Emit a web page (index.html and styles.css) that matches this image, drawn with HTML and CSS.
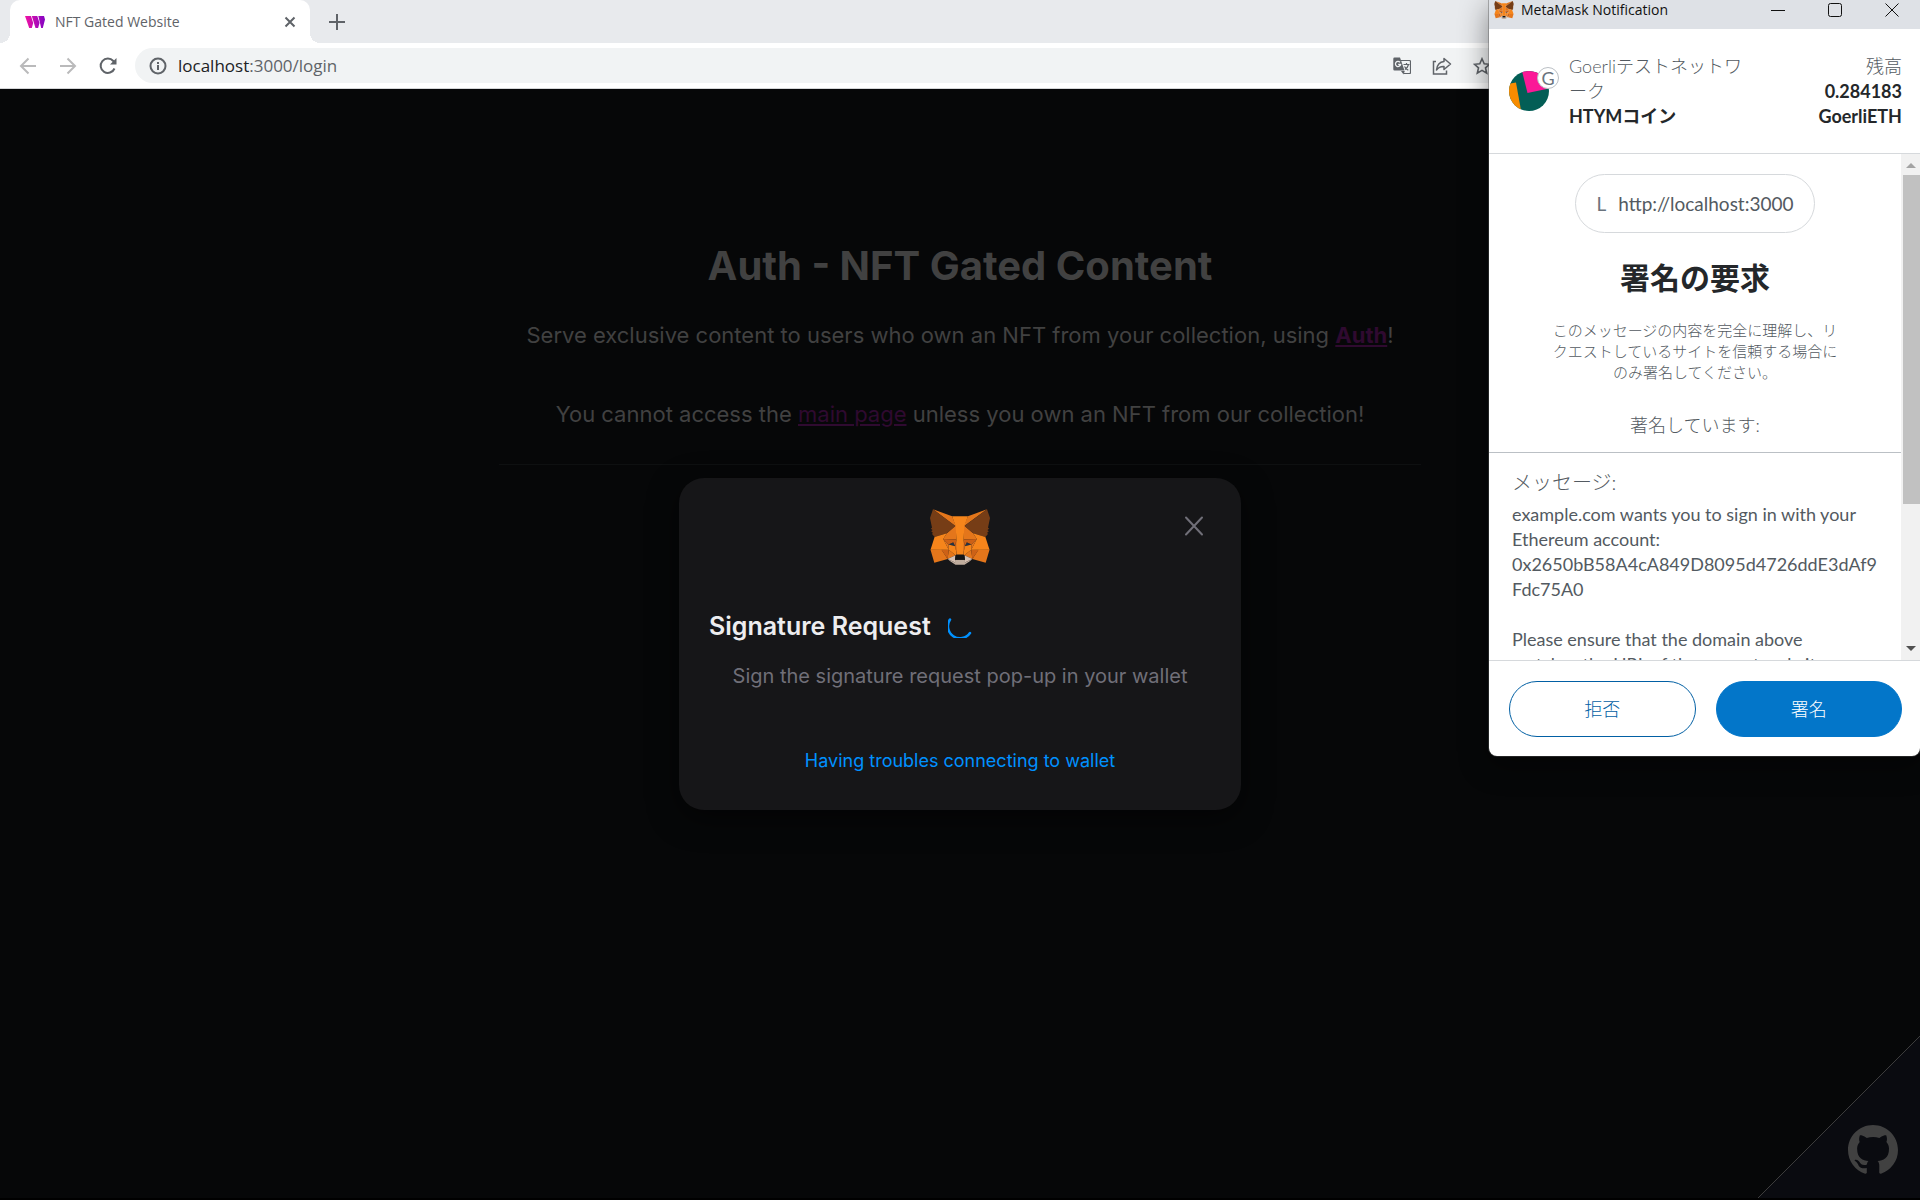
FILE: index.html
```html
<!DOCTYPE html>
<html lang="en">
<head>
  <meta charset="UTF-8">
  <title>NFT Gated Website</title>
  <link rel="stylesheet" href="styles.css">
</head>
<body>

  <!-- fox logo, used in the modal and in the popup title bar -->
  <svg class="defs" width="0" height="0" aria-hidden="true">
    <symbol id="fox" viewBox="31.8 35.5 255 236.4">
      <path fill="#e2761b" d="M274.1 35.5 174.6 109.4 193 65.8z"/>
      <path fill="#e4761b" d="M44.4 35.5 143.1 110.1 125.6 65.8zM238.3 206.8 211.8 247.4 268.5 263 284.8 207.7zM33.9 207.7 50.1 263 106.8 247.4 80.3 206.8zM103.6 138.2 87.8 162.1 144.1 164.6 142.1 104.1zM214.9 138.2 175.9 103.4 174.6 164.6 230.8 162.1zM106.8 247.4 140.6 230.9 111.4 208.1zM177.9 230.9 211.8 247.4 207.1 208.1z"/>
      <path fill="#d7c1b3" d="M211.8 247.4 177.9 230.9 180.6 253 180.3 262.3zM106.8 247.4 138.3 262.3 138.1 253 140.6 230.9z"/>
      <path fill="#233447" d="M138.8 193.5 110.6 185.2 130.5 176.1zM179.7 193.5 188 176.1 208 185.2z"/>
      <path fill="#cd6116" d="M106.8 247.4 111.6 206.8 80.3 207.7zM207 206.8 211.8 247.4 238.3 207.7zM230.8 162.1 174.6 164.6 179.8 193.5 188.1 176.1 208.1 185.2zM110.6 185.2 130.6 176.1 138.8 193.5 144.1 164.6 87.8 162.1z"/>
      <path fill="#e4751f" d="M87.8 162.1 111.4 208.1 110.6 185.2zM208.1 185.2 207.1 208.1 230.8 162.1zM144.1 164.6 138.8 193.5 145.4 227.6 146.9 182.7zM174.6 164.6 171.9 182.6 173.1 227.6 179.8 193.5z"/>
      <path fill="#f6851b" d="M179.8 193.5 173.1 227.6 177.9 230.9 207.1 208.1 208.1 185.2zM110.6 185.2 111.4 208.1 140.6 230.9 145.4 227.6 138.8 193.5z"/>
      <path fill="#c0ad9e" d="M180.3 262.3 180.6 253 178.1 250.8 140.4 250.8 138.1 253 138.3 262.3 106.8 247.4 117.8 256.4 140.1 271.9 178.4 271.9 200.8 256.4 211.8 247.4z"/>
      <path fill="#161616" d="M177.9 230.9 173.1 227.6 145.4 227.6 140.6 230.9 138.1 253 140.4 250.8 178.1 250.8 180.6 253z"/>
      <path fill="#763d16" d="M278.3 114.2 286.8 73.4 274.1 35.5 177.9 106.9 214.9 138.2 267.2 153.5 278.8 140 273.8 136.4 281.8 129.1 275.6 124.3 283.6 118.2zM31.8 73.4 40.3 114.2 34.9 118.2 42.9 124.3 36.8 129.1 44.8 136.4 39.8 140 51.3 153.5 103.6 138.2 140.6 106.9 44.4 35.5z"/>
      <path fill="#f6851b" d="M267.2 153.5 214.9 138.2 230.8 162.1 207.1 208.1 238.3 207.7 284.8 207.7zM103.6 138.2 51.3 153.5 33.9 207.7 80.3 207.7 111.4 208.1 87.8 162.1zM174.6 164.6 177.9 106.9 193.1 65.8 125.6 65.8 140.6 106.9 144.1 164.6 145.3 182.8 145.4 227.6 173.1 227.6 173.3 182.8z"/>
    </symbol>
  </svg>

  <div class="browser">
    <div class="tabs">
      <div class="tab">
        <svg class="favicon" viewBox="0 0 20 12" width="20" height="12">
          <defs>
            <linearGradient id="brand" x1="0" x2="1">
              <stop offset="0" stop-color="#f213a4"/>
              <stop offset="1" stop-color="#8204c4"/>
            </linearGradient>
          </defs>
          <path fill="url(#brand)" d="M0 0h6l2.200 7-1.400 5H4.200zM6.800 0h5.500l2.200 7-1.400 5h-2.600zM13.300 0H19l1 3.500L17.800 12h-1.600z"/>
        </svg>
        <span class="tab-title">NFT Gated Website</span>
        <button class="icon-btn" aria-label="Close tab">
          <svg viewBox="0 0 12 12" width="12" height="12" stroke="#5f6368" stroke-width="2"><path d="M1.500 1.500l9 9M10.500 1.500l-9 9"/></svg>
        </button>
      </div>
      <button class="icon-btn new-tab" aria-label="New tab">
        <svg viewBox="0 0 16 16" width="16" height="16" stroke="#5f6368" stroke-width="2"><path d="M8 0v16M0 8h16"/></svg>
      </button>
    </div>
    <div class="toolbar">
      <button class="icon-btn" aria-label="Back">
        <svg viewBox="0 0 18 18" width="18" height="18" fill="none" stroke="#bababb" stroke-width="2"><path d="M17 9H2M9.500 1.500L2 9l7.500 7.500"/></svg>
      </button>
      <button class="icon-btn" aria-label="Forward">
        <svg viewBox="0 0 18 18" width="18" height="18" fill="none" stroke="#bababb" stroke-width="2"><path d="M1 9h15M8.500 1.500L16 9l-7.500 7.500"/></svg>
      </button>
      <button class="icon-btn" aria-label="Reload">
        <svg viewBox="0 0 18 18" width="18" height="18" fill="none" stroke="#5f6368" stroke-width="2"><path d="M15.500 11.500A7.200 7.200 0 1 1 14.300 4L16 6"/><path d="M17.500 1v6.500H11z" fill="#5f6368" stroke="none"/></svg>
      </button>
      <div class="address">
        <svg viewBox="0 0 18 18" width="18" height="18" fill="none" stroke="#5f6368" stroke-width="2"><circle cx="9" cy="9" r="7.500"/><path d="M9 8v5M9 5v2"/></svg>
        <span class="url"><b>localhost</b>:3000/login</span>
        <span class="actions">
          <svg viewBox="0 0 18 18" width="18" height="18">
            <path fill="none" stroke="#5f6368" stroke-width="1.200" d="M8 3.500h8.500a1 1 0 0 1 1 1v11a1 1 0 0 1-1 1H11"/>
            <path fill="#5f6368" d="M1.500.5H7l4.500 13H1.500a1.200 1.200 0 0 1-1.200-1.200V1.700A1.200 1.200 0 0 1 1.500.5zM8 14h3.800L10.500 17.500z"/>
            <path fill="none" stroke="#f1f3f4" stroke-width="1.300" d="M7 5.200a2.600 2.600 0 1 0 .6 2.300H5.200"/>
            <path fill="none" stroke="#5f6368" stroke-width="1.200" d="M10.500 7.500h6M13.500 6v1.500M15.500 7.500c-.6 2.500-2 4-3.500 5M11.500 9.500c.8 1.400 2.200 2.800 3.800 3.800"/>
          </svg>
          <svg viewBox="0 0 20 18" width="20" height="18" fill="none" stroke="#5f6368" stroke-width="1.500"><path d="M4 4.500H1.500V17H14.500V13.500"/><path stroke-linejoin="round" d="M12 1.500L18.500 7 12 12.500V9.500C8.500 9.300 6.300 10.500 4.500 13 5 8.500 7.500 5 12 4.500z"/></svg>
          <svg viewBox="0 0 18 18" width="18" height="18" fill="none" stroke="#5f6368" stroke-width="1.600"><path d="M9 1.800l2.200 5 5.300.5-4 3.600 1.200 5.300L9 13.400l-4.700 2.800 1.200-5.300-4-3.600 5.300-.5z"/></svg>
        </span>
      </div>
    </div>
  </div>

  <main class="page">
    <h1>Auth - NFT Gated Content</h1>
    <p class="lead">Serve exclusive content to users who own an NFT from your collection, using <a href="#"><b>Auth</b></a>!</p>
    <p class="lead">You cannot access the <a href="#">main page</a> unless you own an NFT from our collection!</p>
    <hr>

    <a class="github" href="#" aria-label="GitHub">
      <svg class="corner" viewBox="0 0 162 162" width="162" height="162"><path fill="#0a0b10" d="M162 0v162H0z"/><path stroke="#3c3c3c" d="M162 0L0 162"/></svg>
      <svg class="mark" viewBox="0 0 16 16" width="50" height="50"><path fill="#414141" d="M8 0C3.58 0 0 3.58 0 8c0 3.54 2.29 6.53 5.47 7.59.4.07.55-.17.55-.38 0-.19-.01-.82-.01-1.49-2.01.37-2.53-.49-2.69-.94-.09-.23-.48-.94-.82-1.13-.28-.15-.68-.52-.01-.53.63-.01 1.08.58 1.23.82.72 1.21 1.87.87 2.33.66.07-.52.28-.87.51-1.07-1.78-.2-3.64-.89-3.64-3.95 0-.87.31-1.59.82-2.15-.08-.2-.36-1.02.08-2.12 0 0 .67-.21 2.2.82.64-.18 1.32-.27 2-.27s1.36.09 2 .27c1.53-1.04 2.2-.82 2.2-.82.44 1.1.16 1.92.08 2.12.51.56.82 1.27.82 2.15 0 3.07-1.87 3.75-3.65 3.95.29.25.54.73.54 1.48 0 1.07-.01 1.93-.01 2.2 0 .21.15.46.55.38A8.01 8.01 0 0 0 16 8c0-4.42-3.58-8-8-8z"/></svg>
    </a>

    <div class="overlay">
      <div class="modal" role="dialog" aria-labelledby="modalTitle">
        <button class="icon-btn modal-close" aria-label="Close">
          <svg viewBox="0 0 20 20" width="20" height="20" fill="none" stroke="#706f78" stroke-width="2" stroke-linecap="round"><path d="M2 1.500l16 17M18 1.500L2 18.500"/></svg>
        </button>
        <svg class="modal-logo" width="60" height="56"><use href="#fox"/></svg>
        <h2 id="modalTitle">Signature Request
          <svg viewBox="0 0 24 24" width="24" height="24" fill="none" stroke="#0091ff" stroke-width="2.500" stroke-linecap="round"><path d="M2 5.500A12 12 0 0 0 22 19"/></svg>
        </h2>
        <p>Sign the signature request pop-up in your wallet</p>
        <a href="#">Having troubles connecting to wallet</a>
      </div>
    </div>
  </main>

  <section class="popup" lang="ja">
    <div class="titlebar">
      <svg width="20" height="18"><use href="#fox"/></svg>
      <span>MetaMask Notification</span>
      <div class="window-btns">
        <button class="icon-btn" aria-label="Minimize"><svg viewBox="0 0 14 14" width="14" height="14" stroke="#111"><path d="M0 7.500h14"/></svg></button>
        <button class="icon-btn" aria-label="Maximize"><svg viewBox="0 0 14 14" width="14" height="14" fill="none" stroke="#111"><rect x=".5" y=".5" width="13" height="13" rx="2"/></svg></button>
        <button class="icon-btn" aria-label="Close"><svg viewBox="0 0 14 14" width="14" height="14" stroke="#111"><path d="M.5.5l13 13M13.500.5l-13 13"/></svg></button>
      </div>
    </div>

    <header class="account">
      <div class="avatar">
        <svg viewBox="0 0 40 40" width="40" height="40">
          <clipPath id="round"><circle cx="20" cy="20" r="20"/></clipPath>
          <g clip-path="url(#round)">
            <path fill="#035e56" d="M0 0h40v40H0z"/>
            <path fill="#fb1897" d="M12-4l6.500 26L42 17V-6z"/>
            <path fill="#f78c00" d="M-2 13l9-1.500L12.500 42H-4z"/>
          </g>
        </svg>
        <span class="network">G</span>
      </div>
      <div class="names">Goerliテストネットワーク<br><b>HTYMコイン</b></div>
      <div class="balance">残高<br><b>0.284183<br>GoerliETH</b></div>
    </header>

    <div class="scroll">
      <div class="content">
        <div class="request">
          <div class="origin"><span class="letter">L</span>http://localhost:3000</div>
          <h3>署名の要求</h3>
          <p class="warning">このメッセージの内容を完全に理解し、リクエストしているサイトを信頼する場合にのみ署名してください。</p>
          <p class="signing">著名しています:</p>
        </div>
        <div class="message">
          <h4>メッセージ:</h4>
          <p>example.com wants you to sign in with your Ethereum account: 0x2650bB58A4cA849D8095d4726ddE3dAf9Fdc75A0</p>
          <p>Please ensure that the domain above<br>matches the URL of the current website.</p>
        </div>
      </div>
      <div class="scrollbar">
        <svg viewBox="0 0 10 5" width="10" height="5"><path fill="#a3a3a3" d="M0 5l5-5 5 5z"/></svg>
        <div class="thumb"></div>
        <svg viewBox="0 0 10 5" width="10" height="5"><path fill="#505050" d="M0 0l5 5 5-5z"/></svg>
      </div>
    </div>

    <footer>
      <button class="btn">拒否</button>
      <button class="btn primary">署名</button>
    </footer>
  </section>

</body>
</html>
```
FILE: styles.css
```css
:root {
  --ui: "Open Sans", "Noto Sans", sans-serif;
  --page: Inter, sans-serif;
  --wallet: Lato, "Noto Sans CJK JP", sans-serif;
  --grey: #5f6368;
  --blue: #0376c9;
}

* {
  box-sizing: border-box;
}

body {
  margin: 0;
  height: 100vh;
  display: flex;
  flex-direction: column;
  overflow: hidden;
  position: relative;
  background: #000;
  font-family: var(--page);
}

h1, h2, h3, h4, p {
  margin: 0;
}

.defs {
  position: absolute;
}

svg {
  display: block;
  flex: none;
}

.icon-btn {
  display: flex;
  padding: 0;
  border: none;
  background: none;
  cursor: pointer;
}

/* browser bars */

.browser {
  font-family: var(--ui);
  background: #fff;
  border-bottom: 1px solid #d5d6d8;
}

.tabs {
  display: flex;
  height: 43px;
  padding-left: 10px;
  background: #e8eaed;
}

.tab {
  display: flex;
  align-items: center;
  width: 300px;
  padding: 0 14px 0 15px;
  background: #fff;
  border-radius: 10px 10px 0 0;
  position: relative;
}

/* the outward curves at the foot of the tab */
.tab::before,
.tab::after {
  content: "";
  position: absolute;
  bottom: 0;
  width: 10px;
  height: 10px;
}

.tab::before {
  right: 100%;
  background: radial-gradient(circle at 0 0, #e8eaed 10px, #fff 10px);
}

.tab::after {
  left: 100%;
  background: radial-gradient(circle at 100% 0, #e8eaed 10px, #fff 10px);
}

.tab-title {
  flex: 1;
  margin-left: 10px;
  font-size: 14px;
  color: var(--grey);
}

.new-tab {
  align-items: center;
  margin-left: 19px;
}

.toolbar {
  display: flex;
  align-items: center;
  gap: 22px;
  height: 45px;
  padding-left: 19px;
}

.address {
  flex: 1;
  display: flex;
  align-items: center;
  height: 35px;
  margin-left: -4px;
  padding: 0 429px 0 14px;
  border-radius: 18px 0 0 18px;
  background: #f1f3f4;
}

.url {
  flex: 1;
  margin-left: 11px;
  font-size: 17px;
  color: var(--grey);
}

.url b {
  font-weight: 400;
  color: #202124;
}

.actions {
  display: flex;
  gap: 21px;
}

/* gated page, dimmed by the modal */

.page {
  flex: 1;
  position: relative;
  margin-bottom: 2px;
  padding-top: 152px;
  background: #060708;
  color: #414141;
  text-align: center;
}

h1 {
  margin-bottom: 29px;
  font-size: 40px;
  line-height: 50px;
}

.lead {
  margin-bottom: 49px;
  font-size: 22px;
  line-height: 30px;
}

.lead + hr {
  width: 922px;
  margin: -14px auto 0;
  border: none;
  border-top: 1px solid #0e1011;
}

.lead a {
  color: #2f0a30;
}

.github .corner,
.github .mark {
  position: absolute;
  right: 0;
  bottom: 0;
}

.github .mark {
  right: 22px;
  bottom: 23px;
}

.overlay {
  position: absolute;
  inset: 0;
  display: flex;
  align-items: center;
  justify-content: center;
}

.modal {
  position: relative;
  width: 562px;
  padding: 31px 30px 34px;
  border-radius: 25px;
  background: #161618;
  box-shadow: 0 8px 30px #0008;
}

.modal-close {
  position: absolute;
  top: 38px;
  right: 37px;
}

.modal-logo {
  margin: 0 auto 46px;
}

.modal h2 {
  display: flex;
  align-items: center;
  gap: 17px;
  margin-bottom: 23px;
  font-size: 25px;
  font-weight: 600;
  line-height: 30px;
  color: #ededef;
}

.modal p {
  margin-bottom: 57px;
  font-size: 20px;
  line-height: 25px;
  color: #706f78;
}

.modal a {
  display: block;
  font-size: 18px;
  line-height: 30px;
  color: #0091ff;
  text-decoration: none;
}

/* wallet window */

.popup {
  position: absolute;
  top: 0;
  right: 0;
  width: 431px;
  height: 756px;
  display: flex;
  flex-direction: column;
  overflow: hidden;
  border-radius: 0 0 8px 8px;
  background: #fff;
  color: #535a61;
  font-family: var(--wallet);
  font-size: 18px;
  line-height: 25px;
  box-shadow: 0 0 0 1px #5556, 0 8px 30px #0007;
}

.titlebar {
  display: flex;
  align-items: center;
  gap: 7px;
  height: 29px;
  padding: 0 21px 10px 5px;
  background: #dee1e6;
  color: #111;
  font-family: var(--ui);
  font-size: 14px;
}

.window-btns {
  display: flex;
  gap: 43px;
  margin-left: auto;
}

.account {
  display: flex;
  align-items: center;
  height: 125px;
  padding: 0 18px 0 20px;
  border-bottom: 1px solid #d6d9dc;
}

.account b {
  color: #24272a;
}

.avatar {
  position: relative;
  margin-right: 20px;
}

.network {
  position: absolute;
  top: -4px;
  right: -10px;
  width: 22px;
  height: 22px;
  border: 1px solid #bbc0c5;
  border-radius: 50%;
  background: #fff;
  color: #6a737d;
  line-height: 20px;
  text-align: center;
}

.names {
  width: 176px;
  word-break: break-all;
}

.names,
.balance {
  font-weight: 300;
}

.balance {
  margin-left: auto;
  text-align: right;
}

.names b,
.balance b {
  font-weight: 700;
}

.scroll {
  flex: 1;
  display: flex;
  min-height: 0;
}

.content {
  flex: 1;
  overflow: hidden;
}

.request {
  padding: 20px 60px 14px;
  border-bottom: 1px solid #bbc0c5;
  text-align: center;
}

.origin {
  display: flex;
  align-items: center;
  gap: 12px;
  width: fit-content;
  height: 59px;
  margin: 0 auto 23px;
  padding: 0 20px;
  border: 1px solid #d6d9dc;
  border-radius: 30px;
  font-size: 19px;
}

.letter {
  color: #6a737d;
}

h3 {
  margin-bottom: 22px;
  font-size: 30px;
  line-height: 42px;
  color: #24272a;
}

.warning {
  margin-bottom: 30px;
  font-size: 15px;
  font-weight: 300;
  line-height: 21px;
}

.signing {
  font-weight: 300;
}

.message {
  padding: 15px 20px 0 23px;
}

.message h4 {
  margin-bottom: 6px;
  font-size: 20px;
  font-weight: 300;
  line-height: 28px;
}

.message p {
  margin-bottom: 25px;
  overflow-wrap: anywhere;
}

.scrollbar {
  display: flex;
  flex-direction: column;
  align-items: center;
  width: 19px;
  padding: 9px 0;
  background: #f1f1f1;
}

.thumb {
  width: 17px;
  height: 329px;
  margin: 7px 0 auto 2px;
  background: #c1c1c1;
}

footer {
  display: flex;
  gap: 20px;
  padding: 20px 18px 19px 20px;
  border-top: 1px solid #d6d9dc;
}

.btn {
  flex: 1;
  height: 56px;
  border: 1px solid #0260a4;
  border-radius: 28px;
  background: #fff;
  color: #0260a4;
  font: inherit;
  font-weight: 300;
  cursor: pointer;
}

.btn.primary {
  border-color: var(--blue);
  background: var(--blue);
  color: #fff;
}
```
